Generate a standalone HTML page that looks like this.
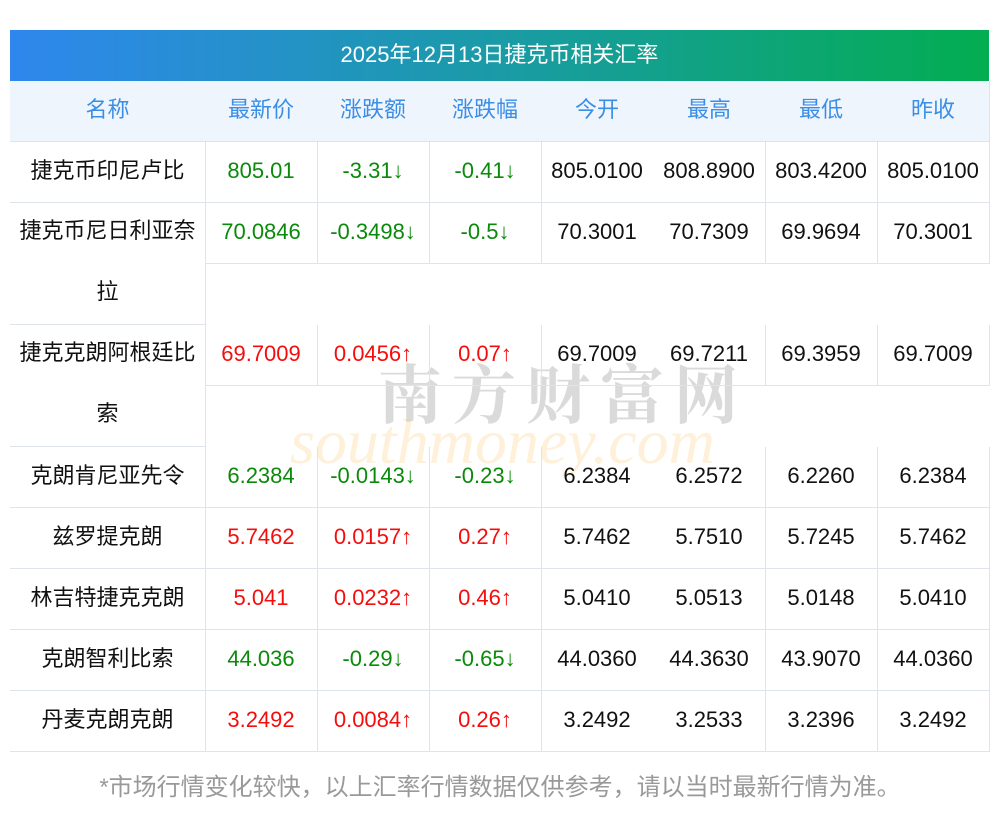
<!DOCTYPE html>
<html><head><meta charset="utf-8"><style>
*{margin:0;padding:0;box-sizing:border-box}
body{width:1000px;height:817px;background:#fff;font-family:"Liberation Sans","Noto Sans CJK SC",sans-serif;position:relative;overflow:hidden}
.title{position:absolute;left:10px;top:30px;width:979px;height:51px;background:linear-gradient(90deg,#2f87ee,#1a9ba6 50%,#03ad51);color:#fff;font-size:22px;text-align:center;line-height:50px}
.c{position:absolute;height:61px;line-height:58px;text-align:center;font-size:22px;border-right:1px solid #dfe3ec;border-bottom:1px solid #dfe3ec;color:#111;white-space:nowrap}
.tall{line-height:61px}
.h{background:#eff5fd;color:#3a8ee6}
.g{color:#0a8a0a}.r{color:#f50d0d}
.nb{border-right:none}
.wm1{position:absolute;left:378px;top:345px;font-size:64px;color:rgba(150,150,150,.35);letter-spacing:10px;font-weight:bold;font-family:"Noto Serif CJK SC",serif}
.wm2{position:absolute;left:290px;top:405px;font-size:64px;color:rgba(253,200,120,.28);font-style:italic;font-family:"Liberation Serif",serif}
.foot{position:absolute;left:0;width:1000px;top:767px;text-align:center;font-size:24px;color:#999;white-space:nowrap}
</style></head><body>
<div class="title">2025年12月13日捷克币相关汇率</div>
<div class="wm1">南方财富网</div>
<div class="wm2">southmoney.com</div>

<div class="c h" style="left:10px;top:81px;width:196px">名称</div>
<div class="c h" style="left:205px;top:81px;width:113px">最新价</div>
<div class="c h" style="left:317px;top:81px;width:113px">涨跌额</div>
<div class="c h" style="left:429px;top:81px;width:113px">涨跌幅</div>
<div class="c h nb" style="left:541px;top:81px;width:112px">今开</div>
<div class="c h" style="left:653px;top:81px;width:113px">最高</div>
<div class="c h" style="left:765px;top:81px;width:113px">最低</div>
<div class="c h" style="left:877px;top:81px;width:113px">昨收</div>

<div class="c" style="left:10px;top:142px;width:196px">捷克币印尼卢比</div>
<div class="c g" style="left:205px;top:142px;width:113px">805.01</div>
<div class="c g" style="left:317px;top:142px;width:113px">-3.31↓</div>
<div class="c g" style="left:429px;top:142px;width:113px">-0.41↓</div>
<div class="c nb" style="left:541px;top:142px;width:112px">805.0100</div>
<div class="c" style="left:653px;top:142px;width:113px">808.8900</div>
<div class="c" style="left:765px;top:142px;width:113px">803.4200</div>
<div class="c" style="left:877px;top:142px;width:113px">805.0100</div>

<div class="c tall" style="left:10px;top:200px;width:196px;height:125px;border-bottom:none;padding-top:0">捷克币尼日利亚奈<br>拉</div>
<div class="c" style="left:10px;top:203px;width:196px;height:122px;background:transparent;color:transparent"> </div>
<div class="c g" style="left:205px;top:203px;width:113px">70.0846</div>
<div class="c g" style="left:317px;top:203px;width:113px">-0.3498↓</div>
<div class="c g" style="left:429px;top:203px;width:113px">-0.5↓</div>
<div class="c nb" style="left:541px;top:203px;width:112px">70.3001</div>
<div class="c" style="left:653px;top:203px;width:113px">70.7309</div>
<div class="c" style="left:765px;top:203px;width:113px">69.9694</div>
<div class="c" style="left:877px;top:203px;width:113px">70.3001</div>

<div class="c tall" style="left:10px;top:322px;width:196px;height:125px;border-bottom:none">捷克克朗阿根廷比<br>索</div>
<div class="c" style="left:10px;top:325px;width:196px;height:122px;color:transparent"> </div>
<div class="c r" style="left:205px;top:325px;width:113px">69.7009</div>
<div class="c r" style="left:317px;top:325px;width:113px">0.0456↑</div>
<div class="c r" style="left:429px;top:325px;width:113px">0.07↑</div>
<div class="c nb" style="left:541px;top:325px;width:112px">69.7009</div>
<div class="c" style="left:653px;top:325px;width:113px">69.7211</div>
<div class="c" style="left:765px;top:325px;width:113px">69.3959</div>
<div class="c" style="left:877px;top:325px;width:113px">69.7009</div>

<div class="c" style="left:10px;top:447px;width:196px">克朗肯尼亚先令</div>
<div class="c g" style="left:205px;top:447px;width:113px">6.2384</div>
<div class="c g" style="left:317px;top:447px;width:113px">-0.0143↓</div>
<div class="c g" style="left:429px;top:447px;width:113px">-0.23↓</div>
<div class="c nb" style="left:541px;top:447px;width:112px">6.2384</div>
<div class="c" style="left:653px;top:447px;width:113px">6.2572</div>
<div class="c" style="left:765px;top:447px;width:113px">6.2260</div>
<div class="c" style="left:877px;top:447px;width:113px">6.2384</div>

<div class="c" style="left:10px;top:508px;width:196px">兹罗提克朗</div>
<div class="c r" style="left:205px;top:508px;width:113px">5.7462</div>
<div class="c r" style="left:317px;top:508px;width:113px">0.0157↑</div>
<div class="c r" style="left:429px;top:508px;width:113px">0.27↑</div>
<div class="c nb" style="left:541px;top:508px;width:112px">5.7462</div>
<div class="c" style="left:653px;top:508px;width:113px">5.7510</div>
<div class="c" style="left:765px;top:508px;width:113px">5.7245</div>
<div class="c" style="left:877px;top:508px;width:113px">5.7462</div>

<div class="c" style="left:10px;top:569px;width:196px">林吉特捷克克朗</div>
<div class="c r" style="left:205px;top:569px;width:113px">5.041</div>
<div class="c r" style="left:317px;top:569px;width:113px">0.0232↑</div>
<div class="c r" style="left:429px;top:569px;width:113px">0.46↑</div>
<div class="c nb" style="left:541px;top:569px;width:112px">5.0410</div>
<div class="c" style="left:653px;top:569px;width:113px">5.0513</div>
<div class="c" style="left:765px;top:569px;width:113px">5.0148</div>
<div class="c" style="left:877px;top:569px;width:113px">5.0410</div>

<div class="c" style="left:10px;top:630px;width:196px">克朗智利比索</div>
<div class="c g" style="left:205px;top:630px;width:113px">44.036</div>
<div class="c g" style="left:317px;top:630px;width:113px">-0.29↓</div>
<div class="c g" style="left:429px;top:630px;width:113px">-0.65↓</div>
<div class="c nb" style="left:541px;top:630px;width:112px">44.0360</div>
<div class="c" style="left:653px;top:630px;width:113px">44.3630</div>
<div class="c" style="left:765px;top:630px;width:113px">43.9070</div>
<div class="c" style="left:877px;top:630px;width:113px">44.0360</div>

<div class="c" style="left:10px;top:691px;width:196px">丹麦克朗克朗</div>
<div class="c r" style="left:205px;top:691px;width:113px">3.2492</div>
<div class="c r" style="left:317px;top:691px;width:113px">0.0084↑</div>
<div class="c r" style="left:429px;top:691px;width:113px">0.26↑</div>
<div class="c nb" style="left:541px;top:691px;width:112px">3.2492</div>
<div class="c" style="left:653px;top:691px;width:113px">3.2533</div>
<div class="c" style="left:765px;top:691px;width:113px">3.2396</div>
<div class="c" style="left:877px;top:691px;width:113px">3.2492</div>

<div class="foot">*市场行情变化较快，以上汇率行情数据仅供参考，请以当时最新行情为准。</div>
</body></html>
